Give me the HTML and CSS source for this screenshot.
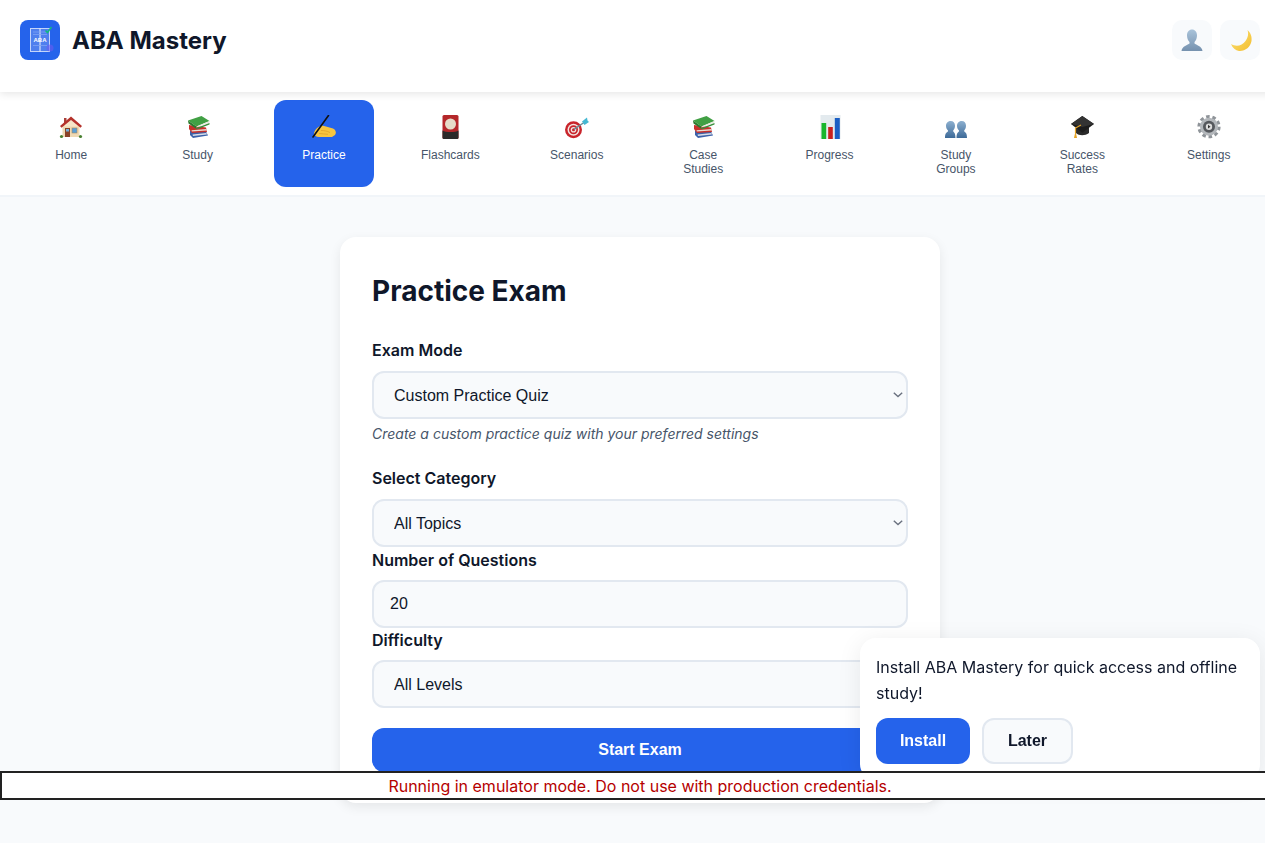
FILE: index.html
```html
<!DOCTYPE html>
<html>
<head>
    <title>ABA Mastery</title>
    <link rel="stylesheet" href="styles.css">
</head>
<body>
<div class="app">
    <header class="topbar">
        <div class="brand">
            <svg class="logo" viewBox="0 0 40 40" width="40" height="40">
                <rect width="40" height="40" rx="8" fill="#2563eb"/>
                <rect x="10.500" y="8.500" width="19" height="23" fill="#4f7fee" stroke="#c3d4fa" stroke-width="1"/>
                <path d="M20 8v24" stroke="#d5e1fb" stroke-width="1.200"/>
                <path d="M13 12h14M13 14.500h14M13 25.500h14" stroke="#7fa2f3" stroke-width=".8"/>
                <text x="20" y="21.500" class="logo-text">ABA</text>
                <circle cx="30" cy="28" r="3.500" fill="#6a5cf0" opacity=".6"/>
                <path d="M25.500 10.500l2 2 4-5.500" fill="none" stroke="#10b981" stroke-width="1.500"/>
            </svg>
            <h1 class="brand-name">ABA Mastery</h1>
        </div>
        <div class="top-actions">
            <button class="icon-btn">
                <svg viewBox="0 0 24 24" width="24" height="24">
                    <defs><linearGradient id="profileGrad" x1="0" y1="0" x2="0" y2="1"><stop offset="0" stop-color="#a9c3da"/><stop offset="1" stop-color="#7591ae"/></linearGradient></defs>
                    <path fill="url(#profileGrad)" d="M12 1.500c3 0 5 2.500 5 6 0 2.500-1 5-2.500 6.500v1.500c1.500 1.500 7.500 2.500 8 7.500h-21c.5-5 6.500-6 8-7.500V14C8 12.500 7 10 7 7.500c0-3.500 2-6 5-6z"/>
                </svg>
            </button>
            <button class="icon-btn">
                <svg viewBox="0 0 24 24" width="24" height="24">
                    <defs><linearGradient id="moonGrad" x1="0" y1="0" x2="1" y2="1"><stop offset="0" stop-color="#fbe27a"/><stop offset="1" stop-color="#f3bd2d"/></linearGradient></defs>
                    <path fill="url(#moonGrad)" d="M19.500 2C23 5 24 9 23.500 13 22.500 19 17 23.500 11 23 7.500 22.500 4.500 20 3 16 8 19 14 18 17.500 13 20.500 9 20.500 5 19.500 2z"/>
                </svg>
            </button>
        </div>
    </header>

    <nav class="tabs">
        <a class="tab">
            <svg class="tab-icon" viewBox="0 0 24 24">
                <rect x="5" y="3" width="2.500" height="5" fill="#a8403a"/>
                <rect x="3.500" y="10" width="17" height="12" fill="#efd9b4"/>
                <path d="M12 5 4 11.500h16z" fill="#f7e6c8"/>
                <path d="M12 1.500 1 11l1.500 1.800L12 5l9.500 7.800L23 11z" fill="#b5322b"/>
                <rect x="6" y="13" width="5" height="9" fill="#8a4228"/>
                <rect x="7" y="14" width="3" height="2.500" fill="#6fb0dc"/>
                <rect x="13" y="13" width="5" height="5" fill="#5a9fd6" stroke="#a98a5e" stroke-width=".6"/>
                <circle cx="2.500" cy="21.500" r="1.600" fill="#47802f"/>
                <circle cx="21.500" cy="21.500" r="1.600" fill="#47802f"/>
            </svg>
            <span>Home</span>
        </a>
        <a class="tab">
            <svg class="tab-icon" viewBox="0 0 24 24">
                <path d="M4 15.500l16 1 2 4L7 23 4 20z" fill="#3c62aa"/>
                <path d="M6.500 19.500l14-1.500.4 1.400L7 21z" fill="#d9dde8"/>
                <path d="M3 10l17 2.500 1 4.500-15 1L3 14z" fill="#c8302b"/>
                <path d="M5.500 15.300l15-1.300.3 1.400-15 1.200z" fill="#e8dcd2"/>
                <path d="M2 5.500 15.500 1 23.500 6 10.500 11.500z" fill="#41a044"/>
                <path d="M2 5.500l8.500 6v2.500L2.500 8.500z" fill="#2b7a2e"/>
                <path d="M10.500 11.500l13-5.500v1.500l-13 5z" fill="#e9eadf"/>
                <path d="M10.500 13l13-5v1.500L10.500 14.500z" fill="#3a8f3c"/>
            </svg>
            <span>Study</span>
        </a>
        <a class="tab active">
            <svg class="tab-icon" viewBox="0 0 24 24">
                <path d="M2 18C3 14 6 11.500 10 10.500l4 1 7 2c3 1.500 3.500 4.500 2 6.500l-3 2H7c-3 0-4.500-1.500-5-4z" fill="#f8c53f"/>
                <path d="M9 15.500c3 0 6 .5 9 2M7 18.500c3 0 6 .8 9 .8" fill="none" stroke="#e0a02a" stroke-width=".8"/>
                <path d="M16.500.5 1 22" stroke="#111" stroke-width="1.600" stroke-linecap="round"/>
            </svg>
            <span>Practice</span>
        </a>
        <a class="tab">
            <svg class="tab-icon" viewBox="0 0 24 24">
                <rect x="4.500" y="0" width="16" height="24" rx="1.500" fill="#b4272a"/>
                <path d="M4.500 15.500c3 2 13 2 16 0V22.500a1.500 1.500 0 0 1-1.500 1.500H6a1.500 1.500 0 0 1-1.500-1.500z" fill="#2b2a2a"/>
                <circle cx="12.500" cy="9" r="5.500" fill="#e6dcc9"/>
            </svg>
            <span>Flashcards</span>
        </a>
        <a class="tab">
            <svg class="tab-icon" viewBox="0 0 24 24">
                <circle cx="8.500" cy="14.700" r="8.500" fill="#c9242b"/>
                <circle cx="8.500" cy="14.700" r="6" fill="#f3e6e2"/>
                <circle cx="8.500" cy="14.700" r="4.500" fill="#c9242b"/>
                <circle cx="8.500" cy="14.700" r="2.800" fill="#f3e6e2"/>
                <circle cx="8.500" cy="14.700" r="1.500" fill="#c9242b"/>
                <path d="M9 14.300 19 7.500" stroke="#6d8a96" stroke-width="1.500"/>
                <path d="M17 6.500l5-4 .5 3L24 7l-4.500 3z" fill="#45b8d2"/>
            </svg>
            <span>Scenarios</span>
        </a>
        <a class="tab">
            <svg class="tab-icon" viewBox="0 0 24 24">
                <path d="M4 15.500l16 1 2 4L7 23 4 20z" fill="#3c62aa"/>
                <path d="M6.500 19.500l14-1.500.4 1.400L7 21z" fill="#d9dde8"/>
                <path d="M3 10l17 2.500 1 4.500-15 1L3 14z" fill="#c8302b"/>
                <path d="M5.500 15.300l15-1.300.3 1.400-15 1.200z" fill="#e8dcd2"/>
                <path d="M2 5.500 15.500 1 23.500 6 10.500 11.500z" fill="#41a044"/>
                <path d="M2 5.500l8.500 6v2.500L2.500 8.500z" fill="#2b7a2e"/>
                <path d="M10.500 11.500l13-5.500v1.500l-13 5z" fill="#e9eadf"/>
                <path d="M10.500 13l13-5v1.500L10.500 14.500z" fill="#3a8f3c"/>
            </svg>
            <span>Case Studies</span>
        </a>
        <a class="tab">
            <svg class="tab-icon" viewBox="0 0 24 24">
                <rect x="2.500" y="0" width="20" height="24" fill="#e3eaee"/>
                <rect x="3.500" y="8" width="4.700" height="16" fill="#18b52c"/>
                <rect x="10.200" y="12" width="4.600" height="12" fill="#c8201f"/>
                <rect x="16.800" y="3" width="5" height="21" fill="#1a5ec4"/>
            </svg>
            <span>Progress</span>
        </a>
        <a class="tab">
            <svg class="tab-icon" viewBox="0 0 24 24">
                <defs><linearGradient id="groupGrad" x1="0" y1="0" x2="0" y2="1"><stop offset="0" stop-color="#8db0d0"/><stop offset="1" stop-color="#3d6a98"/></linearGradient></defs>
                <path fill="url(#groupGrad)" d="M6.800 6c2.500 0 4.200 2 4.200 4.800 0 2-.8 3.700-1.800 4.700v1c1 .9 2.200 1.700 2.300 6.500H1c0-4.800 1.600-5.600 3-6.500v-1c-1.200-1-2-2.700-2-4.700C2 8 4.300 6 6.800 6z"/>
                <path fill="url(#groupGrad)" d="M17.800 6c2.500 0 4.200 2 4.200 4.800 0 2-.8 3.700-1.800 4.700v1c1.400.9 2.800 1.700 2.800 6.500H12.500c.1-4.800 1.300-5.600 2.500-6.500v-1c-1.200-1-2-2.700-2-4.700C13 8 15.300 6 17.800 6z"/>
            </svg>
            <span>Study Groups</span>
        </a>
        <a class="tab">
            <svg class="tab-icon" viewBox="0 0 24 24">
                <path d="M6 11.500V18c3 3 9 3 13 0v-6.500z" fill="#2a2a2a"/>
                <path d="M12.300 1 24 9l-11.700 8.700L1 9z" fill="#1c1c1c"/>
                <path d="M12.300 1 24 9l-11.700 3L1 9z" fill="#333"/>
                <path d="M11 10 5.500 13v5" fill="none" stroke="#e6a425" stroke-width="1.200"/>
                <path d="M5.500 16l-1.500 7h3z" fill="#e6a425"/>
            </svg>
            <span>Success Rates</span>
        </a>
        <a class="tab">
            <svg class="tab-icon" viewBox="0 0 24 24">
                <circle cx="12" cy="11.700" r="10" fill="none" stroke="#8f9499" stroke-width="3.200" stroke-dasharray="3.500 2.780"/>
                <circle cx="12" cy="11.700" r="9" fill="#b3b7bb"/>
                <circle cx="12" cy="11.700" r="6" fill="#55585d"/>
                <circle cx="12" cy="11.700" r="3.200" fill="#dcdcdc"/>
                <path d="M11 9.800l2.500 1.900-2.500 1.900z" fill="#333"/>
            </svg>
            <span>Settings</span>
        </a>
    </nav>

    <main class="content">
        <section class="card">
            <h2 class="card-title">Practice Exam</h2>

            <label class="field-label wide">Exam Mode</label>
            <select class="control"><option>Custom Practice Quiz</option></select>
            <p class="hint">Create a custom practice quiz with your preferred settings</p>

            <label class="field-label wide">Select Category</label>
            <select class="control"><option>All Topics</option></select>

            <label class="field-label number-label">Number of Questions</label>
            <input class="control number" type="number" value="20">

            <label class="field-label">Difficulty</label>
            <select class="control"><option>All Levels</option></select>

            <button class="start-btn">Start Exam</button>
        </section>
    </main>
</div>

<div class="install-prompt">
    <p>Install ABA Mastery for quick access and offline study!</p>
    <div class="install-actions">
        <button class="btn-install">Install</button>
        <button class="btn-later">Later</button>
    </div>
</div>

<div class="emulator-warning">Running in emulator mode. Do not use with production credentials.</div>
</body>
</html>
```

FILE: styles.css
```css
html, body {
    margin: 0;
    overflow: hidden;
    height: 100%;
    background: #f8fafc;
}

body {
    font-family: Inter, "Liberation Sans", sans-serif;
    color: #0f172a;
}

/* layout was built for a 1280 wide window */
.app {
    width: 1280px;
}

.topbar {
    display: flex;
    justify-content: space-between;
    align-items: flex-start;
    height: 40px;
    padding: 20px 20px 32px;
    background: #fff;
    box-shadow: 0 2px 8px rgba(0, 0, 0, .1);
    position: relative;
}

.brand {
    display: flex;
    align-items: center;
    gap: 12px;
}

.logo-text {
    font-family: "Liberation Sans", sans-serif;
    font-size: 6px;
    font-weight: 700;
    fill: #fff;
    text-anchor: middle;
}

.brand-name {
    margin: 0;
    font-size: 24px;
    font-weight: 700;
}

.top-actions {
    display: flex;
    gap: 8px;
}

.icon-btn {
    display: flex;
    align-items: center;
    justify-content: center;
    width: 40px;
    height: 40px;
    padding: 0;
    border: 0;
    border-radius: 10px;
    background: #f8fafc;
}

.tabs {
    display: flex;
    justify-content: space-around;
    padding: 8px;
    background: #fff;
    border-bottom: 2px solid #f1f5f9;
}

.tab {
    box-sizing: border-box;
    width: 100px;
    height: 87px;
    display: flex;
    flex-direction: column;
    align-items: center;
    gap: 9px;
    padding: 15px 16px 0;
    border-radius: 12px;
    color: #475569;
    font-family: "Liberation Sans", sans-serif;
    font-size: 12px;
    line-height: 14px;
    text-align: center;
}

.tab.active {
    background: #2563eb;
    color: #fff;
}

.tab-icon {
    flex: none;
    width: 24px;
    height: 24px;
}

.content {
    padding-top: 40px;
}

.card {
    box-sizing: border-box;
    width: 600px;
    height: 566px;
    margin: 0 auto;
    padding: 32px;
    background: #fff;
    border-radius: 16px;
    box-shadow: 0 4px 12px rgba(0, 0, 0, .08);
}

.card-title {
    margin: 0 0 25px;
    font-size: 28px;
    line-height: 44px;
    font-weight: 700;
}

.field-label {
    display: block;
    margin-bottom: 8px;
    font-size: 16px;
    line-height: 24px;
    font-weight: 600;
}

.field-label.wide {
    margin-bottom: 9px;
}

.field-label.number-label {
    margin-top: 1px;
}

.control {
    box-sizing: border-box;
    display: block;
    width: 536px;
    height: 48px;
    padding: 0 16px;
    border: 2px solid #e2e8f0;
    border-radius: 12px;
    background-color: #f8fafc;
    color: #0f172a;
    font-family: "Liberation Sans", sans-serif;
    font-size: 16px;
}

select.control {
    appearance: none;
    padding: 0 20px;
    background-image: url("data:image/svg+xml,%3Csvg xmlns='http://www.w3.org/2000/svg' width='10' height='6'%3E%3Cpath d='M.8.8 5 4.600 9.200.8' fill='none' stroke='%236b7280' stroke-width='1.400'/%3E%3C/svg%3E");
    background-repeat: no-repeat;
    background-position: right 3px center;
}

.hint {
    margin: 5px 0 22px;
    font-size: 14px;
    line-height: 20px;
    font-style: italic;
    color: #475569;
}

.start-btn {
    display: block;
    width: 536px;
    height: 44px;
    margin-top: 20px;
    border: 0;
    border-radius: 12px;
    background: #2563eb;
    color: #fff;
    font-family: "Liberation Sans", sans-serif;
    font-size: 16px;
    font-weight: 700;
}

.install-prompt {
    position: fixed;
    left: 860px;
    top: 638px;
    box-sizing: border-box;
    width: 400px;
    height: 142px;
    padding: 16px;
    background: #fff;
    border-radius: 16px;
    box-shadow: 0 4px 24px rgba(0, 0, 0, .08);
}

.install-prompt p {
    margin: 0 0 12px;
    font-size: 16px;
    line-height: 26px;
}

.install-actions {
    display: flex;
    gap: 12px;
}

.btn-install, .btn-later {
    height: 46px;
    border-radius: 12px;
    font-family: "Liberation Sans", sans-serif;
    font-size: 16px;
    font-weight: 700;
}

.btn-install {
    width: 94px;
    border: 0;
    background: #2563eb;
    color: #fff;
}

.btn-later {
    width: 91px;
    border: 2px solid #e2e8f0;
    background: #f8fafc;
    color: #0f172a;
}

.emulator-warning {
    position: fixed;
    left: 0;
    top: 771px;
    box-sizing: border-box;
    width: 1280px;
    height: 29px;
    border: 2px solid #222;
    background: #fff;
    color: #b50000;
    font-size: 16px;
    line-height: 26px;
    text-align: center;
}
```
